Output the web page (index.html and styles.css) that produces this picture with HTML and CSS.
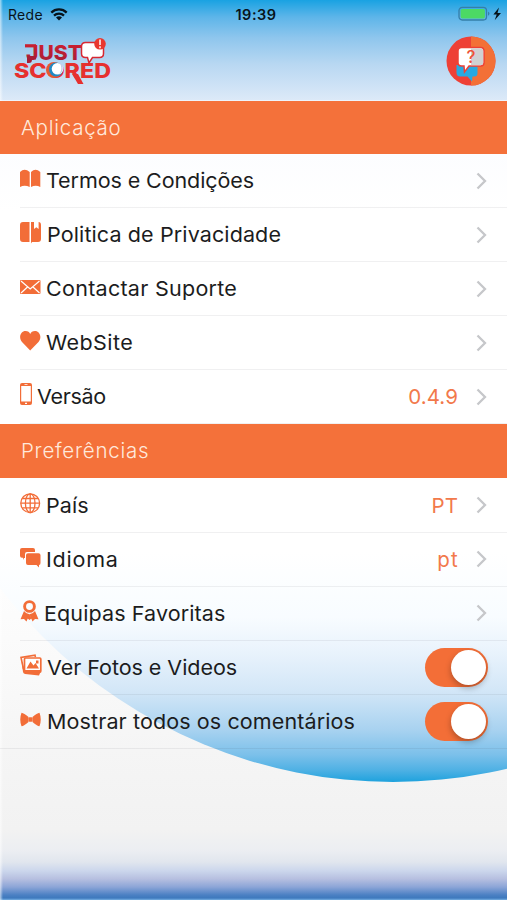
FILE: index.html
```
<!DOCTYPE html>
<html lang="pt">

<head>
    <meta charset="UTF-8">
    <meta name="viewport" content="width=device-width, initial-scale=1.0">
    <title>Just Scored</title>
    <link rel="stylesheet" href="styles.css">
</head>

<body>
    <div class="screen">
        <header class="header">
            <div class="status-bar">
                <div class="network">
                    <span>Rede</span>
                    <svg width="18" height="13" viewBox="0 0 18 13">
                        <path d="M1.300 4.600a11 11 0 0 1 15.400 0M4 7.600a7.200 7.200 0 0 1 10 0" fill="none" stroke="#07131b" stroke-width="2.300" />
                        <path d="M9 12.600L6 9.600a4.300 4.300 0 0 1 6 0z" fill="#07131b" />
                    </svg>
                </div>
                <span class="clock">19:39</span>
                <div class="battery">
                    <svg width="46" height="16" viewBox="0 0 46 16">
                        <rect x="1" y="1.400" width="27.500" height="12.600" rx="3.200" fill="none" stroke="#367fa8" stroke-width="1.300" />
                        <rect x="2.600" y="3" width="24.300" height="9.400" rx="1.600" fill="#4cd964" />
                        <path d="M30 5.600q3 2.100 0 4.200z" fill="#367fa8" />
                        <path d="M41 1.500l-5.600 7h3.300l-2 5.700 6.300-7.200h-3.500z" fill="#07131b" />
                    </svg>
                </div>
            </div>
            <div class="title-bar">
                <svg class="logo" width="98" height="49" viewBox="0 0 98 49">
                    <defs>
                        <linearGradient id="just" x1="0" y1="0" x2="0" y2="1">
                            <stop offset="0" stop-color="#d3202f" />
                            <stop offset="1" stop-color="#a31e38" />
                        </linearGradient>
                    </defs>
                    <text class="logo-text logo-text--just" x="12" y="23.500" textLength="56" lengthAdjust="spacingAndGlyphs">JUST</text>
                    <path d="M11 9.800h11" fill="none" stroke="#c82031" stroke-width="3.200" />
                    <path d="M13 20h9v3.500h-4q0 3.500-3 3.500h-2z" fill="#a81e37" />
                    <text class="logo-text" x="0" y="42" textLength="97" lengthAdjust="spacingAndGlyphs">SCORED</text>
                    <path d="M58 38h6l5.500 10h-5.500z" fill="#e6302f" />
                    <circle cx="40" cy="34" r="8" fill="#e65a32" />
                    <circle cx="42" cy="33.500" r="7" fill="#2089c4" />
                    <circle cx="43.500" cy="32.800" r="5.800" fill="#fff" />
                    <path d="M46 27.500a6 6 0 0 1-1 10.500c3-3 3-7 1-10.500z" fill="#b5cce6" />
                    <path d="M71.500 6.500h14q4 0 4 4v7q0 4-4 4h-7L75 27l-1.500-5.500h-2q-4 0-4-4v-7q0-4 4-4z" fill="#fff" stroke="#d82832" stroke-width="1.500" />
                    <circle cx="86" cy="7.800" r="5.800" fill="#e9372f" />
                    <path d="M86 3.500V9M86 10.300v2" stroke="#fff" stroke-width="1.500" />
                </svg>
                <svg width="50" height="50" viewBox="0 0 50 50">
                    <circle cx="25" cy="25" r="24.500" fill="#ee4036" />
                    <path d="M25 .5a24.500 24.500 0 0 1 0 49z" fill="#f37037" />
                    <path d="M10.500 29h21v8q0 3.500-3 3.500H26.500l-.5 5-4.500-5H14q-3.500 0-3.500-4z" fill="#27a9e1" />
                    <path d="M15.500 11.500h19q3.500 0 3.500 3.500v11.500q0 3.500-3.500 3.500H23l-4.500 6-.5-6h-2.500q-3.500 0-3.500-3.500V15q0-3.500 3.500-3.500z" fill="#fff" stroke="#ee4036" stroke-width="1.500" />
                    <path d="M25 12.300h9.500q2.700 0 2.700 2.700v11.500q0 2.700-2.700 2.700H25z" fill="#d0d1d2" />
                    <text class="question" x="25" y="26.500" text-anchor="middle">?</text>
                </svg>
            </div>
        </header>

        <h2 class="section-title">Aplicação</h2>
        <ul class="list">
            <li class="row">
                <svg class="icon" width="21" height="20" viewBox="0 0 21 20">
                    <path d="M0 3q4.500-4.500 9.700 0v15q-5-2.500-9.700 0zM11 3q4.500-4.500 9.300 0v15q-4.500-2.500-9.300 0z" />
                </svg>
                <span class="label label--termos">Termos e Condições</span>
                <svg class="chevron" viewBox="0 0 11 18"><path d="M1.500 1.500L9 9l-7.500 7.500" /></svg>
            </li>
            <li class="row">
                <svg class="icon" width="22" height="22" viewBox="0 0 22 22">
                    <path d="M3 0h6.500v20H3q-3 0-3-3V3q0-3 3-3zM11 0h3v7l2.300-1.700L18.600 7V0q2.400 0 2.400 3v14q0 3-3 3h-6l-1 1.500z" />
                </svg>
                <span class="label label--politica">Politica de Privacidade</span>
                <svg class="chevron" viewBox="0 0 11 18"><path d="M1.500 1.500L9 9l-7.500 7.500" /></svg>
            </li>
            <li class="row">
                <svg class="icon" width="21" height="14" viewBox="0 0 21 14">
                    <rect width="20.500" height="14" rx="1" />
                    <path d="M1 1l9.200 8L19.500 1M1 13l6.500-6M19.500 13L13 7" fill="none" stroke="#fff" stroke-width="1.200" />
                </svg>
                <span class="label label--suporte">Contactar Suporte</span>
                <svg class="chevron" viewBox="0 0 11 18"><path d="M1.500 1.500L9 9l-7.500 7.500" /></svg>
            </li>
            <li class="row">
                <svg class="icon" width="21" height="20" viewBox="0 0 21 20">
                    <path d="M10.200 19.500L2 11C-2 6 1 0 5.500 0 8 0 9.500 1.200 10.200 3 11 1.200 12.500 0 15 0c4.500 0 7.500 6 3.500 11z" />
                </svg>
                <span class="label label--website">WebSite</span>
                <svg class="chevron" viewBox="0 0 11 18"><path d="M1.500 1.500L9 9l-7.500 7.500" /></svg>
            </li>
            <li class="row">
                <svg class="icon" width="12" height="23" viewBox="0 0 12 23">
                    <path fill-rule="evenodd" d="M2 0h8q2 0 2 2v18q0 2-2 2H2q-2 0-2-2V2q0-2 2-2zM1.200 3v15.500h9.600V3zM4.500 1.200v.8h3v-.8zM5 19.700v1.200h2v-1.200z" />
                </svg>
                <span class="label label--versao">Versão</span>
                <span class="value">0.4.9</span>
                <svg class="chevron" viewBox="0 0 11 18"><path d="M1.500 1.500L9 9l-7.500 7.500" /></svg>
            </li>
        </ul>

        <h2 class="section-title section-title--preferences">Preferências</h2>
        <ul class="list">
            <li class="row">
                <svg class="icon icon--line" width="21" height="21" viewBox="0 0 21 21">
                    <circle cx="10.200" cy="10.200" r="9.400" />
                    <ellipse cx="10.200" cy="10.200" rx="4.800" ry="9.400" />
                    <path d="M10.200.8v18.800M.8 10.200h18.800M2.300 5.500h15.800M2.300 14.900h15.800" />
                </svg>
                <span class="label">País</span>
                <span class="value">PT</span>
                <svg class="chevron" viewBox="0 0 11 18"><path d="M1.500 1.500L9 9l-7.500 7.500" /></svg>
            </li>
            <li class="row">
                <svg class="icon" width="21" height="21" viewBox="0 0 21 21">
                    <path d="M2 1h11q2 0 2 2v2H7Q5 5 5 7v4H4l-1 2v-2.200H2q-2 0-2-2V3q0-2 2-2z" />
                    <path d="M8 6.200h10.500q2 0 2 2V16q0 2-1.500 2v2.500L16.500 18H8q-2 0-2-2V8.200q0-2 2-2z" />
                </svg>
                <span class="label label--idioma">Idioma</span>
                <span class="value value--language">pt</span>
                <svg class="chevron" viewBox="0 0 11 18"><path d="M1.500 1.500L9 9l-7.500 7.500" /></svg>
            </li>
            <li class="row">
                <svg class="icon" width="19" height="22" viewBox="0 0 19 22">
                    <circle cx="9.500" cy="6.500" r="4.900" fill="none" stroke="#f26d38" stroke-width="2.900" />
                    <path d="M4 11q2 3 5.500 3.200L6.500 21.500l-2.500-2.500-3.500.3zM15 11q-2 3-5.500 3.200l3 7.300 2.500-2.500 3.500.3zM9.500 14l1.800 4.500-1.800 1.500-1.800-1.500z" />
                </svg>
                <span class="label label--equipas">Equipas Favoritas</span>
                <svg class="chevron" viewBox="0 0 11 18"><path d="M1.500 1.500L9 9l-7.500 7.500" /></svg>
            </li>
            <li class="row">
                <svg class="icon" width="22" height="22" viewBox="0 0 22 22">
                    <path d="M3.500 15L1 3.500l14-2.300.4 2" fill="none" stroke="#f26d38" stroke-width="1.600" />
                    <path d="M1.500 7l1.500 11q.3 1.700 2 2l14 1.500 1.500-3.500L5 17z" />
                    <rect x="4.500" y="4" width="16.300" height="14" rx="1" fill="#fff" stroke="#f26d38" stroke-width="1.700" />
                    <path d="M6.500 14.500l4-7 3 4 2-2.500 3.500 5.500zM16 6.500h2.500v3H16z" />
                    <path d="M4.500 16h16.300v2.500H4.500z" />
                </svg>
                <span class="label label--fotos">Ver Fotos e Videos</span>
                <span class="switch"></span>
            </li>
            <li class="row row--last">
                <svg class="icon" width="22" height="15" viewBox="0 0 22 15">
                    <path d="M1.500.7Q4 1 8.500 5v5Q4 14 1.500 14.300q-2.500-6.800 0-13.600zM19.500.7Q17 1 12.500 5v5q4.500 4 7 4.300 2.500-6.800 0-13.600z" />
                    <rect x="8.500" y="5.300" width="4" height="4.400" rx="1" />
                </svg>
                <span class="label label--comentarios">Mostrar todos os comentários</span>
                <span class="switch"></span>
            </li>
        </ul>
    </div>
</body>

</html>
```
FILE: styles.css
```
* {
    box-sizing: border-box;
}

body {
    margin: 0;
    font-family: Inter, "Liberation Sans", sans-serif;
}

.screen {
    position: relative;
    z-index: 0;
    height: 900px;
    overflow: hidden;
    background:
        linear-gradient(to right, rgb(255 255 255 / 60%), rgb(255 255 255 / 0%) 3px),
        linear-gradient(to bottom, #19a2e2 0, #5db5e9 17px, #8fc6ed 38px, #b9d8f2 65px, #dce9f8 100px, transparent 101px),
        linear-gradient(to bottom, #fff 550px, #fafafa 660px, #f5f5f5 750px, #f2f2f2 830px, #eceef2 850px, #e1e6ee 862px, #cbd6ec 871px, #b6bfe0 879px, #8ca5d7 887px, #4b80c3 895px, #3e79bd 898px, #76afe2 900px);
}

/* big ball behind the list */
.screen::before {
    content: "";
    position: absolute;
    z-index: -1;
    top: -208px;
    left: -102px;
    width: 990px;
    height: 990px;
    border-radius: 50%;
    background: linear-gradient(to bottom, transparent 308px, #fcfdff 360px, #fff 420px, #fff 760px, #f8fcff 825px, #e9f3fc 860px, #d2e6f7 900px, #a8d2f0 938px, #7bc0ea 963px, #4fb1e4 978px, #1ea2dd 990px);
}

.header {
    height: 101px;
}

.status-bar {
    height: 28px;
    padding: 0 3px 0 8px;
    display: grid;
    grid-template-columns: 1fr auto 1fr;
    align-items: center;
    font-size: 14px;
    color: #07131b;
}

.network {
    display: flex;
    align-items: center;
    gap: 7px;
    letter-spacing: .3px;
}

.clock {
    font-weight: 600;
    font-size: 14.5px;
    letter-spacing: .5px;
}

.battery {
    display: flex;
    justify-content: flex-end;
}

.title-bar {
    display: flex;
    justify-content: space-between;
    padding: 8px 11px 0 14px;
}

.logo-text {
    font-family: Inter, sans-serif;
    font-weight: 800;
    font-size: 20.5px;
    fill: #e6302f;
}

.logo-text--just {
    fill: url(#just);
}

.question {
    font-size: 17px;
    font-weight: 500;
    fill: #ee5136;
}

.section-title {
    margin: 0;
    height: 53px;
    padding-left: 21px;
    background: #f4713a;
    color: #ffe9dc;
    font-size: 20.5px;
    font-weight: 300;
    line-height: 53px;
    letter-spacing: .75px;
}

.section-title--preferences {
    height: 54px;
    line-height: 54px;
}

.list {
    margin: 0;
    padding: 0 0 0 20px;
    list-style: none;
}

.row {
    display: flex;
    align-items: center;
    height: 54.1px;
    padding-right: 20px;
    border-bottom: 1px solid rgb(60 60 80 / 8%);
    color: #1b1c20;
    font-size: 20.5px;
}

.row--last {
    margin-left: -20px;
    padding-left: 20px;
}

.icon {
    flex: none;
    margin: -4px 5px 0 0;
    fill: #f26d38;
}

.icon--line {
    fill: none;
    stroke: #f26d38;
    stroke-width: 1.3;
}

.label {
    margin-right: auto;
    white-space: nowrap;
    letter-spacing: .1px;
    transform: scaleX(1.05);
    transform-origin: left;
}

.label--termos {
    letter-spacing: -.1px;
}

.label--suporte {
    letter-spacing: .25px;
}

.label--website {
    letter-spacing: .4px;
}

.label--versao {
    letter-spacing: -.3px;
}

.label--idioma {
    letter-spacing: .75px;
}

.label--fotos {
    letter-spacing: -.05px;
}

.value {
    margin-right: 18px;
    color: #f2794b;
    letter-spacing: .1px;
}

.value--language {
    letter-spacing: 1.2px;
    margin-right: 17px;
}

.chevron {
    flex: none;
    width: 11px;
    height: 18px;
    fill: none;
    stroke: #c6c7ca;
    stroke-width: 2.3;
}

.switch {
    flex: none;
    width: 63px;
    height: 39px;
    margin-right: -1px;
    padding: 2px;
    border-radius: 20px;
    background: #f36e37;
}

.switch::after {
    content: "";
    display: block;
    width: 35px;
    height: 35px;
    margin-left: auto;
    border-radius: 50%;
    background: #fff;
    box-shadow: 0 3px 6px rgb(0 0 0 / 28%);
}
```
